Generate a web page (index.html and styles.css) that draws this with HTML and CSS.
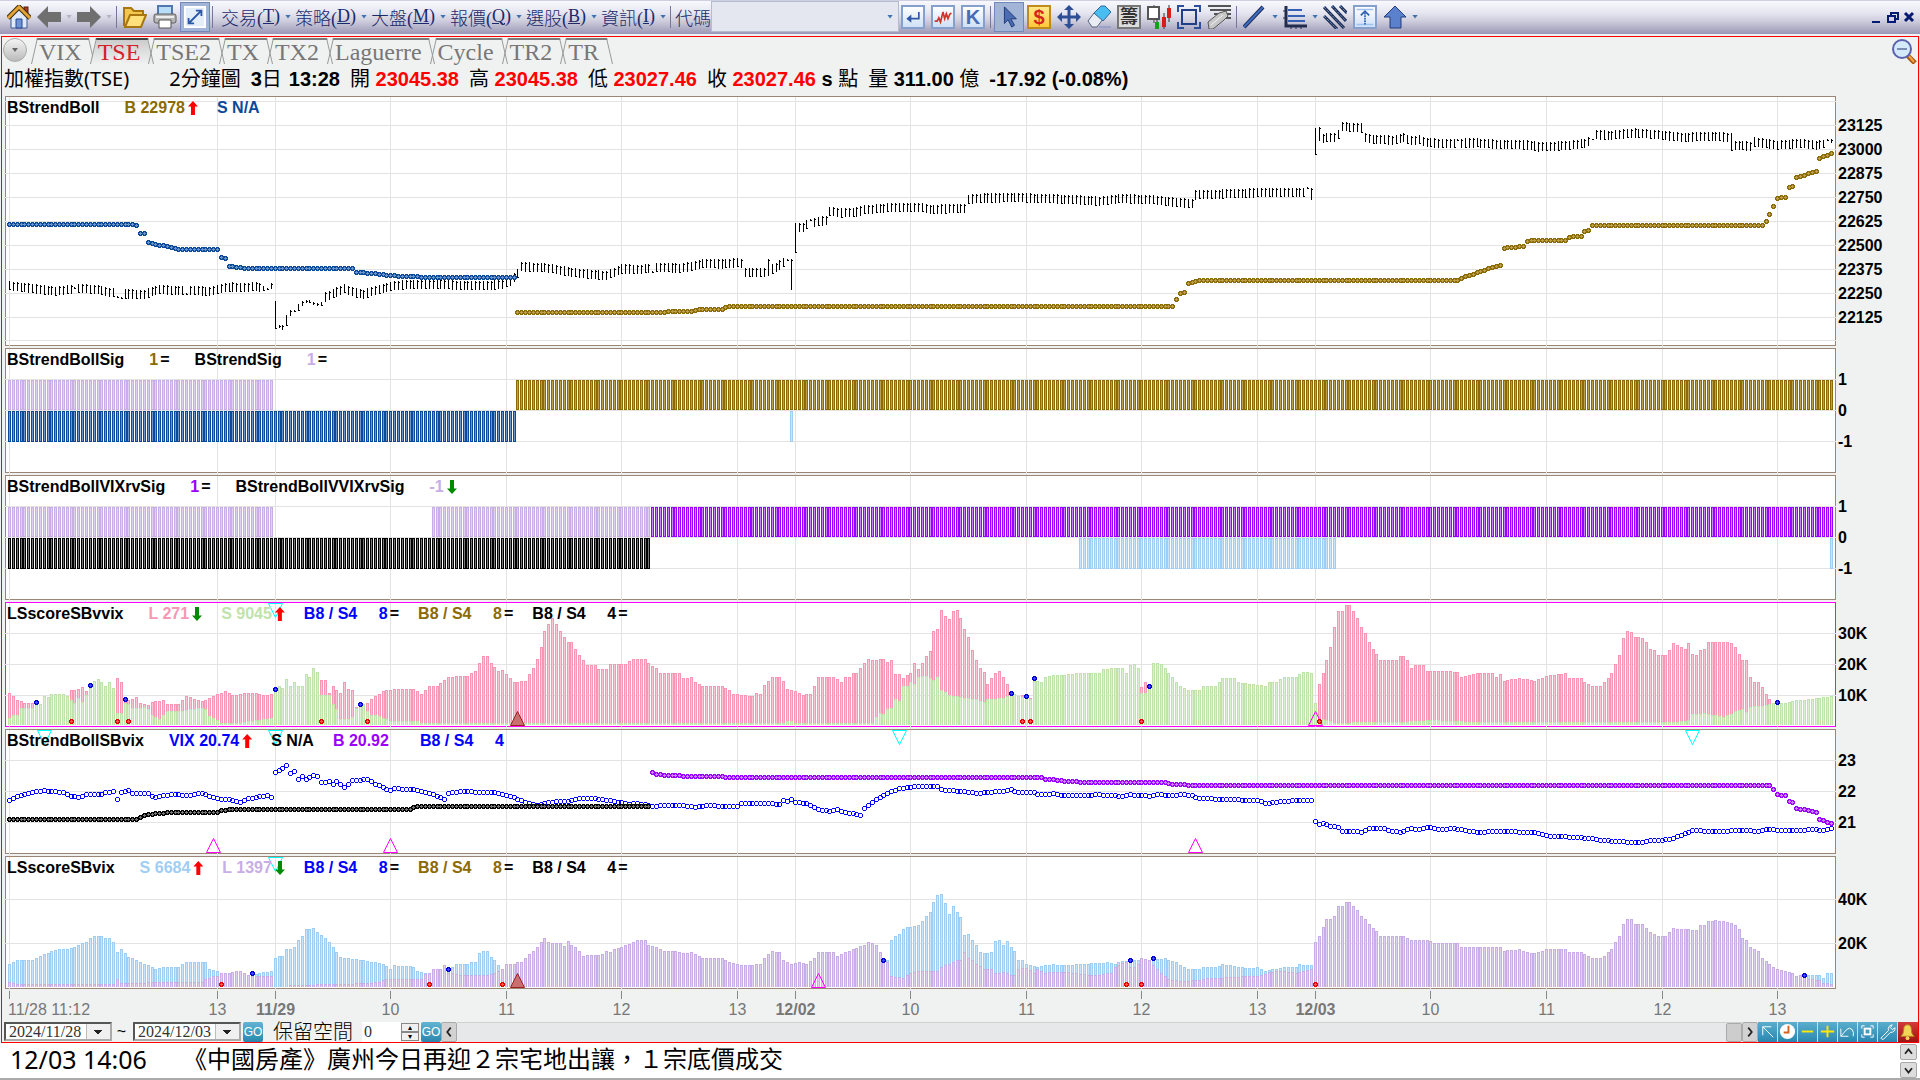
FILE: index.html
```
<!DOCTYPE html>
<html lang="zh-TW">
  <head>
    <meta charset="UTF-8" />
    <meta name="viewport" content="width=device-width, initial-scale=1.0" />
    <title>加權指數(TSE)</title>
    <link rel="stylesheet" href="styles.css">
  </head>
  <body>
    <header class="toolbar">
      <div class="tools">
        <button class="tool" aria-label="首頁"><svg viewBox="0 0 24 24"><rect x="17" y="2" width="4" height="8" fill="#b23a1c" stroke="#5a1e10"/><path d="M4 12 12 4l8 8v11H4z" fill="#dfe9fa" stroke="#3a5a9c"/><path d="M9 23v-9h6v9z" fill="#6d93d4" stroke="#27468c"/><path d="M1 13 12 2l11 11" fill="none" stroke="#3b2a0c" stroke-width="5"/><path d="M1 13 12 2l11 11" fill="none" stroke="#e2a437" stroke-width="3"/></svg></button>
        <button class="tool" aria-label="上一頁"><svg viewBox="0 0 24 24"><path d="M0 12 11 1v6h13v10H11v6z" fill="#6f6f6f"/></svg></button>
        <span class="caret faded"></span>
        <button class="tool" aria-label="下一頁"><svg viewBox="0 0 24 24"><path d="M24 12 13 1v6H0v10h13v6z" fill="#6f6f6f"/></svg></button>
        <span class="caret faded"></span>
        <span class="sep"></span>
        <button class="tool" aria-label="開啟"><svg viewBox="0 0 24 24"><path d="M1 21V3h7l3 3h9v5" fill="#f3c64d" stroke="#a87610" stroke-width="2"/><path d="M2 22 7 10h16l-5 12z" fill="#ffe07a" stroke="#a87610" stroke-width="2"/></svg></button>
        <button class="tool" aria-label="列印"><svg viewBox="0 0 24 24"><path d="M5 10V1h14v9" fill="#b9dcf7" stroke="#5378ae" stroke-width="2"/><rect x="1" y="9" width="22" height="9" rx="2" fill="#b5b5b5" stroke="#5e5e5e"/><path d="M6 15h12v8H6z" fill="#fff" stroke="#555"/><path d="M3 12h18" stroke="#eee" stroke-width="2"/></svg></button>
        <button class="tool pressed" aria-label="全螢幕"><svg viewBox="0 0 24 24"><rect x="1" y="1" width="22" height="22" fill="#e4eefb" stroke="#fff" stroke-width="2"/><path d="M6 18 18 6M13 5h6v6M5 13v6h6" fill="none" stroke="#2c58a8" stroke-width="2"/></svg></button>
        <span class="sep"></span>
      </div>
      <nav class="menus">
        <button class="menu">交易(<u>T</u>)<i class="caret"></i></button>
        <button class="menu">策略(<u>D</u>)<i class="caret"></i></button>
        <button class="menu">大盤(<u>M</u>)<i class="caret"></i></button>
        <button class="menu">報價(<u>Q</u>)<i class="caret"></i></button>
        <button class="menu">選股(<u>B</u>)<i class="caret"></i></button>
        <button class="menu">資訊(<u>I</u>)<i class="caret"></i></button>
      </nav>
      <span class="sep"></span>
      <label class="code-label" for="code">代碼</label>
      <div class="combo"><input id="code" type="text"><i class="caret"></i></div>
      <div class="tools drawing">
        <button class="tool boxed" aria-label="輸入"><svg viewBox="0 0 24 24"><path d="M19 6v8H7" fill="none" stroke="#2f57a5" stroke-width="2"/><path d="M4 14l6-5v10z" fill="#2f57a5"/></svg></button>
        <button class="tool boxed" aria-label="走勢圖"><svg viewBox="0 0 24 24"><path d="M2 17h3l2-4 2 5 3-12 2 8 2-6 2 6 2-5 2-2" fill="none" stroke="#d2342c" stroke-width="2"/></svg></button>
        <button class="tool boxed letter">K</button>
        <span class="sep"></span>
        <button class="tool pressed" aria-label="選取"><svg viewBox="0 0 24 24"><path d="M7 1v18l4-4 4 8 3-2-4-7h6z" fill="#4b6cb3" stroke="#1b3473"/></svg></button>
        <button class="tool boxed money">$</button>
        <button class="tool" aria-label="移動"><svg viewBox="0 0 24 24"><path d="M12 2v20M2 12h20" stroke="#2e4f95" stroke-width="3"/><path d="m12 0 5 5H7zM12 24l5-5H7zM0 12l5-5v10zM24 12l-5-5v10z" fill="#2e4f95"/></svg></button>
        <button class="tool" aria-label="橡皮擦"><svg viewBox="0 0 24 24"><path d="m1 16 6-8 9 6-6 8H5z" fill="#e9edf3" stroke="#57627c"/><path d="m7 8 7-7h4l6 6-8 9z" fill="#49bdf0" stroke="#31689c"/><path d="M12 22h12" stroke="#7f8ec9"/></svg></button>
        <button class="tool boxed chips">籌</button>
        <button class="tool" aria-label="K線"><svg viewBox="0 0 24 24"><path d="M7 0v18" stroke="#444"/><rect x="1" y="2" width="11" height="12" fill="#fff" stroke="#555" stroke-width="2"/><path d="M10 14v10M17 8v16M22 0v17" stroke="#333"/><rect x="8" y="17" width="4" height="7" fill="#16a01e"/><rect x="15" y="12" width="4" height="10" fill="#d81d1d"/><rect x="20" y="3" width="4" height="10" fill="#d81d1d"/></svg></button>
        <button class="tool" aria-label="框選"><svg viewBox="0 0 24 24"><path d="M1 7V1h6M17 1h6v6M23 17v6h-6M7 23H1v-6" fill="none" stroke="#2b4f9c" stroke-width="2"/><rect x="5" y="5" width="14" height="14" fill="none" stroke="#203f86" stroke-width="2"/></svg></button>
        <button class="tool" aria-label="清除畫線"><svg viewBox="0 0 24 24"><path d="M1 1h23M3 5h21M7 9h17M14 13h10" stroke="#555" stroke-width="2"/><path d="m1 17 11-9 7-2 2 5-4 4-11 9H2z" fill="#c7c7c7" stroke="#555"/><path d="m4 20 12-10" stroke="#f4f4f4"/></svg></button>
        <span class="sep"></span>
        <button class="tool" aria-label="直線"><svg viewBox="0 0 24 24"><path d="M1 22 20 2" stroke="#1e2c54" stroke-width="4"/><path d="M1 22 20 2" stroke="#3c6bc4" stroke-width="2"/></svg></button>
        <span class="caret"></span>
        <button class="tool" aria-label="黃金分割"><svg viewBox="0 0 24 24"><path d="M3 1v20h21" fill="none" stroke="#222d4e" stroke-width="3"/><path d="M5 5h14M5 11h17M5 16h17" stroke="#3560b5" stroke-width="2"/><path d="M8 20v4M13 20v4M18 20v4M0 6h4M0 13h4" stroke="#222d4e"/></svg></button>
        <span class="caret"></span>
        <button class="tool" aria-label="平行線"><svg viewBox="0 0 24 24"><path d="M1 11 14 24M1 2l20 21M9 1l14 15M17 1l7 7" stroke="#222d4e" stroke-width="3"/><path d="M1 11 14 24M1 2l20 21M9 1l14 15M17 1l7 7" stroke="#5b86cf" stroke-dasharray="3 1"/></svg></button>
        <button class="tool boxed" aria-label="上移"><svg viewBox="0 0 24 24"><path d="M2 3h20M2 21h20" stroke="#9ec2ee" stroke-width="2"/><path d="M12 7v14" stroke="#2c5fb4" stroke-width="2" stroke-dasharray="2 1"/><path d="m7 10 5-5 5 5" fill="none" stroke="#2c5fb4" stroke-width="2"/></svg></button>
        <button class="tool" aria-label="箭頭"><svg viewBox="0 0 24 24"><path d="m12 1 11 11h-5v11H7V12H1z" fill="#5b80cc" stroke="#223c7c"/></svg></button>
        <span class="caret"></span>
      </div>
      <div class="window-buttons">
        <button aria-label="最小化"><svg viewBox="0 0 12 12"><path d="M1 11h8" stroke="#051a73" stroke-width="2"/></svg></button>
        <button aria-label="還原"><svg viewBox="0 0 12 12"><path d="M4 5V2h7v6H8" fill="none" stroke="#051a73" stroke-width="2"/><path d="M1 5h7v6H1z" fill="none" stroke="#051a73" stroke-width="2"/></svg></button>
        <button aria-label="關閉"><svg viewBox="0 0 12 12"><path d="m2 2 8 8M10 2l-8 8" stroke="#051a73" stroke-width="3"/></svg></button>
      </div>
    </header>

    <main class="workspace">
      <div class="tabs">
        <button class="tab-list" aria-label="分頁清單"><i class="caret"></i></button>
        <button class="tab">VIX</button>
        <button class="tab active">TSE</button>
        <button class="tab">TSE2</button>
        <button class="tab">TX</button>
        <button class="tab">TX2</button>
        <button class="tab">Laguerre</button>
        <button class="tab">Cycle</button>
        <button class="tab">TR2</button>
        <button class="tab">TR</button>
        <button class="zoom-out" aria-label="縮小"><svg viewBox="0 0 26 26"><path d="m17 18 7 7" stroke="#a85b16" stroke-width="5"/><path d="m18 18 5 6" stroke="#f0a244" stroke-width="2"/><circle cx="11" cy="11" r="9" fill="#d4e9fa" stroke="#5a61ae" stroke-width="2"/><path d="M6 11h10" stroke="#24306f"/></svg></button>
      </div>

      <div class="quote">
        <span class="symbol">加權指數(TSE)</span>
        <span class="period">2分鐘圖</span>
        <span class="field"><b>3</b>日</span>
        <b class="time">13:28</b>
        <span class="field">開 <b class="up">23045.38</b></span>
        <span class="field">高 <b class="up">23045.38</b></span>
        <span class="field">低 <b class="up">23027.46</b></span>
        <span class="field">收 <b class="up">23027.46</b> <b>s</b> 點</span>
        <span class="field">量 <b>311.00</b> 億</span>
        <b>-17.92 (-0.08%)</b>
      </div>

      <div class="charts">
        <section class="row tall">
          <div class="panel">
            <svg class="plot" id="plot0"></svg>
            <div class="legend">
              <span class="name">BStrendBoll</span>
              <span class="gold">B 22978<i class="arrow up"></i></span>
              <span class="blue">S N/A</span>
            </div>
          </div>
          <svg class="scale" id="scale0"></svg>
        </section>
        <section class="row">
          <div class="panel">
            <svg class="plot" id="plot1"></svg>
            <div class="legend">
              <span class="name">BStrendBollSig</span>
              <span class="name"><em class="gold">1</em>=</span>
              <span class="name">BStrendSig</span>
              <span><em class="lavender">1</em>=</span>
            </div>
          </div>
          <svg class="scale" id="scale1"></svg>
        </section>
        <section class="row">
          <div class="panel">
            <svg class="plot" id="plot2"></svg>
            <div class="legend">
              <span class="name">BStrendBollVIXrvSig</span>
              <span class="name"><em class="purple">1</em>=</span>
              <span class="name">BStrendBollVVIXrvSig</span>
              <span class="lavender">-1<i class="arrow down"></i></span>
            </div>
          </div>
          <svg class="scale" id="scale2"></svg>
        </section>
        <section class="row">
          <div class="panel selected">
            <svg class="plot" id="plot3"></svg>
            <div class="legend">
              <span class="name">LSscoreSBvvix</span>
              <span class="pink">L 271<i class="arrow down"></i></span>
              <span class="green">S 9045<i class="arrow up"></i></span>
              <span class="pair bright">B8 / S4</span>
              <span><em class="bright">8</em>=</span>
              <span class="pair gold">B8 / S4</span>
              <span><em class="gold">8</em>=</span>
              <span class="pair">B8 / S4</span>
              <span><em>4</em>=</span>
            </div>
          </div>
          <svg class="scale" id="scale3"></svg>
        </section>
        <section class="row">
          <div class="panel">
            <svg class="plot" id="plot4"></svg>
            <div class="legend">
              <span class="name">BStrendBollSBvix</span>
              <span class="bright">VIX 20.74<i class="arrow up"></i></span>
              <span>S N/A</span>
              <span class="purple wide">B 20.92</span>
              <span class="pair bright">B8 / S4</span>
              <span class="bright">4</span>
            </div>
          </div>
          <svg class="scale" id="scale4"></svg>
        </section>
        <section class="row last">
          <div class="panel">
            <svg class="plot" id="plot5"></svg>
            <div class="legend">
              <span class="name">LSscoreSBvix</span>
              <span class="sky">S 6684<i class="arrow up"></i></span>
              <span class="lavender">L 1397<i class="arrow down"></i></span>
              <span class="pair bright">B8 / S4</span>
              <span><em class="bright">8</em>=</span>
              <span class="pair gold">B8 / S4</span>
              <span><em class="gold">8</em>=</span>
              <span class="pair">B8 / S4</span>
              <span><em>4</em>=</span>
            </div>
          </div>
          <svg class="scale" id="scale5"></svg>
        </section>
      </div>
      <svg class="time-axis" id="timeAxis"></svg>

      <div class="controls">
        <select class="date" aria-label="開始日期"><option>2024/11/28</option></select>
        <span class="tilde">~</span>
        <select class="date" aria-label="結束日期"><option>2024/12/03</option></select>
        <button class="go">GO</button>
        <label class="space-label" for="space">保留空間</label>
        <input class="space" id="space" type="text" value="0">
        <div class="spinner"><button aria-label="增加">▴</button><button aria-label="減少">▾</button></div>
        <button class="go">GO</button>
        <button class="scroll-button" aria-label="向左"><svg viewBox="0 0 16 20"><path d="m10 5-4 5 4 5" fill="none" stroke="#222" stroke-width="2"/></svg></button>
        <div class="track"><span class="thumb"></span></div>
        <button class="scroll-button" aria-label="向右"><svg viewBox="0 0 16 20"><path d="m6 5 4 5-4 5" fill="none" stroke="#222" stroke-width="2"/></svg></button>
        <button class="action" aria-label="游標"><svg viewBox="0 0 20 20"><path d="M5 14V5h9M5 5l11 11" fill="none" stroke="#fff"/></svg></button>
        <button class="action" aria-label="時間"><svg viewBox="0 0 20 20"><circle cx="10" cy="10" r="8" fill="#fff"/><path d="M11 4v7H6" fill="none" stroke="#d8621c" stroke-width="2"/></svg></button>
        <button class="action" aria-label="縮小間距"><svg viewBox="0 0 20 20"><path d="M4 10h12" stroke="#ffe800" stroke-width="2"/></svg></button>
        <button class="action" aria-label="放大間距"><svg viewBox="0 0 20 20"><path d="M3 10h14M10 4v12" stroke="#ffe800" stroke-width="2"/></svg></button>
        <button class="action" aria-label="復原"><svg viewBox="0 0 20 20"><path d="M3 7v8h8M3 15 9 8q3-3 6 0 2 3 1 7" fill="none" stroke="#fff"/></svg></button>
        <button class="action" aria-label="全圖"><svg viewBox="0 0 20 20"><path d="M4 7V4h3M13 4h3v3M16 13v3h-3M7 16H4v-3" fill="none" stroke="#fff"/><rect x="7" y="7" width="6" height="6" fill="none" stroke="#fff" stroke-width="2"/></svg></button>
        <button class="action" aria-label="設定"><svg viewBox="0 0 20 20"><path d="m3 17 8-8q-1-5 4-6l-2 3 2 2 3-2q0 5-5 5l-7 7q-2 1-3-1z" fill="none" stroke="#fff"/></svg></button>
        <button class="action alarm" aria-label="警示"><svg viewBox="0 0 20 20"><path d="M3 15q3-2 3-7 0-5 4-5t4 5q0 5 3 7z" fill="#f2d65a" stroke="#b78b17"/><circle cx="10" cy="17" r="2" fill="#f2d65a"/></svg></button>
      </div>
    </main>

    <footer class="news">
      <time>12/03 14:06</time>
      <a href="#">《中國房產》廣州今日再迎２宗宅地出讓，１宗底價成交</a>
      <div class="news-scroll">
        <button aria-label="上一則"><svg viewBox="0 0 16 16"><path d="m4 10 4-5 4 5" fill="none" stroke="#222" stroke-width="2"/></svg></button>
        <button aria-label="下一則"><svg viewBox="0 0 16 16"><path d="m4 6 4 5 4-5" fill="none" stroke="#222" stroke-width="2"/></svg></button>
      </div>
    </footer>

    <script src="chart.js"></script>
  </body>
</html>
```

FILE: styles.css
```
* {
  box-sizing: border-box;
}
body {
  margin: 0;
  height: 100vh;
  display: flex;
  flex-direction: column;
  background: #f0f2f1;
  font-family: "Liberation Sans", "Noto Sans CJK TC", sans-serif;
  font-size: 16px;
  color: #000;
  overflow: hidden;
}
button {
  margin: 0;
  padding: 0;
  border: none;
  background: none;
  font: inherit;
  color: inherit;
}
svg {
  display: block;
}
.caret {
  flex: none;
  width: 6px;
  height: 4px;
  background: #3f72af;
  clip-path: polygon(0 0, 100% 0, 50% 100%);
}
.caret.faded {
  background: #b4b4bf;
}

/* toolbar */
.toolbar {
  flex: none;
  height: 36px;
  padding: 0 5px 2px 7px;
  display: flex;
  align-items: center;
  border-top: 1px solid #cfcfe2;
  border-bottom: 2px solid #f0f0f6;
  background: linear-gradient(#f8f8fd, #e6e6f1 35%, #cfcedd 60%, #9a97b6);
  color: #1c2a6b;
}
.tools {
  display: flex;
  align-items: center;
  gap: 6px;
}
.tool {
  width: 24px;
  height: 24px;
  flex: none;
}
.tool svg {
  width: 24px;
  height: 24px;
}
.tool.boxed {
  border: 2px solid #86a0cd;
  background: linear-gradient(#fff, #cfe0f6);
}
.tool.boxed svg {
  width: 20px;
  height: 20px;
}
.tool.pressed {
  width: 30px;
  height: 30px;
  margin: 0 -3px;
  padding: 3px;
  border: 1px solid #7189b8;
  background: #a3b5d6;
}
.tool.pressed svg {
  width: 22px;
  height: 22px;
}
.tool.letter,
.tool.money,
.tool.chips {
  font-size: 20px;
  line-height: 20px;
  font-weight: bold;
  color: #4a6cb4;
}
.tool.money {
  border-color: #c08a1c;
  background: linear-gradient(#ffe98c, #ffc83a);
  color: #d4281c;
}
.tool.chips {
  border-color: #777;
  background: #ddd;
  font-size: 18px;
  color: #333;
}
.sep {
  flex: none;
  width: 1px;
  height: 22px;
  background: #77779a;
}
.tools .caret {
  margin: 0 -1px;
}
.tools .sep {
  margin-left: -1px;
}
.menus {
  display: flex;
  gap: 4px;
  margin: 0 4px 0 8px;
}
.menu {
  display: flex;
  align-items: center;
  font-family: "Liberation Serif", "Noto Sans CJK TC", serif;
  font-size: 18px;
  font-weight: 300;
}
.menu .caret {
  margin-left: 5px;
}
.menu u {
  text-decoration-thickness: 1px;
}
.code-label {
  margin-left: 4px;
  font-size: 18px;
  font-weight: 300;
}
.combo {
  width: 188px;
  height: 31px;
  display: flex;
  align-items: center;
  padding-right: 5px;
  border: 1px solid #b5bcce;
  background: #e4e7f0;
}
.combo input {
  flex: 1;
  min-width: 0;
  border: none;
  background: none;
}
.drawing {
  margin-left: 2px;
}
.window-buttons {
  margin-left: auto;
  display: flex;
  gap: 4px;
}
.window-buttons svg {
  width: 12px;
  height: 12px;
}

/* workspace */
.workspace {
  flex: 1;
  min-height: 0;
  margin: 0 1px;
  display: flex;
  flex-direction: column;
  border: 1px solid #f00;
}
.tabs {
  flex: none;
  height: 27px;
  display: flex;
  align-items: flex-start;
  padding-left: 1px;
}
.tab-list {
  width: 24px;
  height: 24px;
  margin: 1px 4px 0 0;
  display: flex;
  align-items: center;
  justify-content: center;
  border: 1px solid #aaa;
  border-radius: 50%;
  background: linear-gradient(#f4f4f4, #bbb);
}
.tab-list .caret {
  background: #666;
}
.tab {
  position: relative;
  z-index: 0;
  height: 26px;
  margin-top: 1px;
  padding: 0 8px;
  font-family: "Liberation Serif", serif;
  font-size: 24px;
  line-height: 28px;
  color: #777;
}
.tab::before,
.tab::after {
  content: "";
  position: absolute;
  z-index: -1;
  top: 0;
  bottom: 0;
  border-top: 2px solid #7c7c7c;
}
.tab::before {
  left: 3px;
  right: 50%;
  border-left: 1px solid #999;
  transform: skewX(-13deg);
}
.tab::after {
  left: 50%;
  right: -3px;
  border-right: 1px solid #999;
  transform: skewX(13deg);
}
.tab.active {
  color: #d6202c;
}
.tab.active::before,
.tab.active::after {
  border-top-color: #444;
  background: linear-gradient(#ccc, #f0f2f1);
}
.zoom-out {
  margin: 1px 1px 0 auto;
}
.zoom-out svg {
  width: 26px;
  height: 26px;
}
.quote {
  flex: none;
  height: 32px;
  padding: 0 0 2px 2px;
  display: flex;
  align-items: center;
  gap: 10px;
  font-size: 20px;
  line-height: 30px;
  white-space: nowrap;
}
.quote .symbol {
  margin-right: 30px;
}
.symbol,
.period {
  font-family: "Noto Sans", "Noto Sans CJK TC", sans-serif;
}
.quote .time {
  margin-left: -3px;
}
.up {
  color: #f00;
}

/* chart panels */
.charts {
  flex: 1;
  min-height: 0;
  display: flex;
  flex-direction: column;
  gap: 2px;
  padding-left: 3px;
}
.row {
  flex: 125 1 0;
  min-height: 0;
  display: flex;
}
.row.tall {
  flex-grow: 250;
}
.row.last {
  flex-grow: 133;
}
.panel {
  position: relative;
  flex: 1;
  min-width: 0;
  border: 1px solid #9b8574;
  background: #fff;
}
.panel.selected {
  border-color: #f0f;
}
.plot {
  position: absolute;
  inset: 0;
  width: 100%;
  height: 100%;
  overflow: visible;
}
.scale {
  flex: none;
  width: 82px;
  height: 100%;
  overflow: visible;
  font-weight: bold;
}
.legend {
  position: absolute;
  top: 1px;
  left: 1px;
  display: flex;
  gap: 19px;
  line-height: 20px;
  font-weight: bold;
  white-space: nowrap;
}
.legend em {
  margin-right: 2px;
  font-style: normal;
}
.legend .pair {
  min-width: 56px;
}
.legend .name {
  margin-right: 6px;
}
.legend .wide {
  margin-right: 12px;
}
.arrow {
  display: inline-block;
  width: 10px;
  height: 14px;
  margin: 0 0 -2px 3px;
  clip-path: polygon(50% 0, 100% 40%, 70% 40%, 70% 100%, 30% 100%, 30% 40%, 0 40%);
  background: #f00;
}
.arrow.down {
  background: #008a00;
  transform: rotate(180deg);
}
.gold { color: #8c6a04; }
.blue { color: #0b4a98; }
.bright { color: #00f; }
.purple { color: #9a00ff; }
.lavender { color: #c8aee4; }
.pink { color: #f797b5; }
.green { color: #bfe3ab; }
.sky { color: #9fcef4; }
.grid {
  stroke: #e3e3e3;
}
.time-axis {
  flex: none;
  width: 100%;
  height: 32px;
  fill: #777;
}
.time-axis path {
  stroke: #888;
}

/* bottom controls */
.controls {
  flex: none;
  height: 21px;
  display: flex;
  align-items: center;
}
.date {
  width: 108px;
  height: 19px;
  margin-left: 2px;
  padding: 0 0 0 3px;
  appearance: none;
  border: 2px inset #aaa;
  border-radius: 0;
  background: linear-gradient(#222, #222) 88px 6px / 8px 1px no-repeat, linear-gradient(#222, #222) 89px 7px / 6px 1px no-repeat, linear-gradient(#222, #222) 90px 8px / 4px 1px no-repeat, linear-gradient(#222, #222) 91px 9px / 2px 1px no-repeat, linear-gradient(90deg, #fff 80px, #888 80px, #f0f0f0 81px);
  font-family: "Liberation Serif", serif;
  font-size: 16px;
  line-height: 16px;
  color: #333;
}
.tilde {
  width: 19px;
  text-align: center;
}
.go {
  width: 20px;
  height: 20px;
  margin-left: 2px;
  border-radius: 2px;
  background: linear-gradient(#62b4d2, #2b86ac);
  font-size: 12px;
  color: #fff;
}
.space-label {
  margin: 0 9px 0 10px;
  font-size: 20px;
  line-height: 20px;
  font-weight: 300;
}
.space {
  width: 39px;
  height: 20px;
  padding: 0 2px;
  border: none;
  background: #fff;
  font-family: "Liberation Serif", serif;
  font-size: 16px;
  color: #333;
}
.spinner {
  display: flex;
  flex-direction: column;
}
.spinner button {
  width: 18px;
  height: 9px;
  border: 1px solid #888;
  background: #f0f0f0;
  font-size: 8px;
  line-height: 7px;
}
.scroll-button {
  width: 16px;
  height: 20px;
  border: 1px solid #aaa;
  border-radius: 2px;
  background: #d2d2d2;
}
.scroll-button svg {
  width: 14px;
  height: 18px;
}
.track {
  flex: 1;
  height: 20px;
  background: #e6e8ea;
  border-top: 1px solid #d0d0d0;
}
.thumb {
  display: block;
  width: 16px;
  height: 19px;
  margin-left: auto;
  border: 1px solid #aaa;
  border-radius: 2px;
  background: #cdcdcd;
}
.action {
  width: 20px;
  height: 20px;
  border-right: 1px solid #bfe0ee;
  background: linear-gradient(#5aaecd, #2a86b0);
}
.action svg {
  width: 19px;
  height: 19px;
}
.action.alarm {
  border: none;
  background: linear-gradient(#d43a3a, #9c1414);
}

/* news ticker */
.news {
  flex: none;
  height: 37px;
  padding-left: 10px;
  display: flex;
  align-items: center;
  border-bottom: 2px solid #aaa;
  background: #fff;
  font-family: "Noto Sans", "Noto Sans CJK TC", sans-serif;
  font-size: 24px;
  line-height: 30px;
}
.news time,
.news a {
  padding-bottom: 4px;
}
.news time {
  font-size: 25px;
}
.news a {
  margin-left: 36px;
  color: #000;
  text-decoration: none;
}
.news-scroll {
  margin-left: auto;
  padding-right: 3px;
  display: flex;
  flex-direction: column;
  gap: 2px;
}
.news-scroll button {
  width: 17px;
  height: 16px;
  border: 1px solid #aaa;
  border-radius: 2px;
  background: #ddd;
}
.news-scroll svg {
  width: 15px;
  height: 14px;
}
```

FILE: chart.js
```
const BARS = 474;
const COLORS = {
  blue: ["#0b4a98", "#6c96cb"],
  gold: ["#8c6a04", "#bda04c"],
  lavender: ["#c8aee4", "#e0d0f2"],
  black: ["#000", "#777"],
  purple: ["#9a00ff", "#cc84ff"],
  sky: ["#9fcef4", "#c9e4fb"],
  pink: ["#f797b5", "#fbc6d7"],
  green: ["#bfe3ab", "#daf0ce"],
  vix: ["#00f", "#fff"],
};

// hour and session lines: [bar, label, bold]
const times = [
  [0, "11/28 11:12"], [54, "13"], [69, "11/29", true], [99, "10"], [129, "11"], [159, "12"], [189, "13"],
  [204, "12/02", true], [234, "10"], [264, "11"], [294, "12"], [324, "13"],
  [339, "12/03", true], [369, "10"], [399, "11"], [429, "12"], [459, "13"],
];

// series are flat lists of bar, value; the bars between are interpolated
const price = [
  0,22286, 4,22276, 8,22266, 12,22257, 18,22273, 23,22264, 26,22250, 30,22243, 35,22241, 39,22266, 43,22260, 48,22262,
  52,22255, 55,22273, 58,22279, 61,22276, 64,22283, 66,22273, 68,22283, 82,22227, 84,22245, 87,22270, 90,22248, 92,22241,
  95,22260, 100,22288, 105,22292, 112,22295, 117,22286, 123,22286, 128,22292, 130,22309, 132,22349, 133,22384, 138,22382,
  141,22375, 145,22358, 151,22344, 155,22340, 159,22373, 164,22372, 168,22382, 174,22377, 177,22387, 180,22401, 185,22399,
  189,22406, 190,22400, 191,22356, 196,22356, 199,22382, 201,22406, 204,22536, 205,22590, 206,22590, 207,22605, 209,22616,
  212,22627, 213,22674, 216,22665, 220,22670, 222,22682, 229,22694, 237,22693, 239,22684, 248,22689, 249,22736, 253,22743,
  262,22745, 275,22736, 283,22727, 288,22740, 296,22736, 301,22724, 307,22714, 308,22759, 317,22766, 329,22774, 336,22774,
  340,23078, 341,23055, 343,23060, 344,23057, 345,23075, 346,23116, 351,23109, 352,23057, 354,23047, 357,23050, 359,23043,
  362,23059, 364,23042, 366,23047, 368,23033, 371,23029, 375,23029, 381,23031, 387,23023, 395,23019, 397,23010, 404,23017,
  409,23028, 410,23038, 412,23073, 416,23071, 422,23083, 428,23073, 435,23059, 441,23066, 446,23061, 448,23017, 452,23014,
  453,23036, 459,23019, 465,23029, 469,23019, 473,23038,
];
// bars with a range of their own: low, high
const ranges = {
  28: [22224, 22230], 29: [22222, 22228], 17: [22271, 22278], 46: [22238, 22246], 66: [22260, 22284], 67: [22270, 22273],
  68: [22270, 22300], 69: [22061, 22205], 70: [22064, 22083], 71: [22057, 22080], 72: [22075, 22132], 73: [22127, 22158],
  74: [22153, 22160], 75: [22153, 22189], 76: [22179, 22207], 77: [22193, 22213], 78: [22193, 22213], 79: [22183, 22202],
  80: [22180, 22193], 81: [22180, 22200], 167: [22356, 22360], 197: [22335, 22424], 202: [22424, 22427],
  203: [22264, 22427], 204: [22457, 22615], 208: [22629, 22634], 337: [22796, 22799], 338: [22734, 22797],
  339: [22967, 23109], 340: [23040, 23115], 376: [23045, 23049], 411: [23047, 23051], 447: [22990, 23080],
  471: [23005, 23047], 472: [23046, 23049], 473: [23030, 23049],
};
const upper = [
  0,22608, 32,22608, 33,22602, 34,22561, 35,22561, 36,22514, 39,22500, 44,22479, 54,22479, 55,22436, 56,22431, 57,22391,
  61,22380, 89,22380, 90,22359, 100,22340, 107,22333, 131,22333,
];
const lower = [
  132,22149, 170,22151, 171,22156, 177,22156, 179,22165, 185,22165, 186,22177, 188,22182, 302,22182, 303,22214, 304,22250,
  305,22254, 306,22302, 309,22318, 376,22318, 377,22328, 387,22396, 388,22484, 393,22493, 394,22521, 397,22526, 404,22526,
  405,22542, 408,22545, 409,22573, 410,22578, 411,22604, 455,22604, 456,22625, 457,22661, 458,22703, 459,22744, 461,22750,
  462,22802, 463,22807, 464,22854, 469,22883, 470,22953, 473,22977,
];
const vvixLong = [
  0,10.6, 2,8.3, 4,7.4, 7,7.4, 8,0, 15,0, 16,11.3, 18,11.7, 19,12.3, 20,11, 21,0, 27,0, 28,15.3, 29,13.9, 30,8.4, 31,8.1,
  33,9.1, 34,7.4, 36,6.5, 37,7.7, 40,8.1, 41,6.8, 44,6.8, 46,9.4, 48,8.7, 50,7.8, 53,9.5, 56,11.1, 58,9.9, 60,10.1, 62,10.6,
  65,10.3, 67,9.7, 68,10.3, 69,0, 80,0, 81,14.6, 82,14.6, 83,10.6, 84,12.6, 86,10.6, 87,13.9, 88,11.9, 89,11.6, 90,6, 92,6,
  93,7.4, 95,9.5, 97,11, 99,11.6, 105,11.9, 107,10.3, 109,12.6, 111,12.6, 114,15.5, 116,16.1, 119,16.1, 121,17.7, 122,20.3,
  123,22.3, 124,22.3, 125,20.3, 127,17.7, 128,18, 130,15.3, 131,14.1, 134,14.3, 136,18.7, 137,21.6, 138,25.2, 139,30.6,
  140,32.6, 141,34.8, 142,32.6, 144,28.7, 145,26.9, 146,26.9, 147,24.8, 148,22.9, 149,21, 150,19.4, 152,19.4, 153,18.1,
  155,18.1, 156,19.7, 160,20, 162,21.6, 165,21.6, 166,20.1, 168,18.5, 169,16.9, 174,16.9, 175,15.2, 177,15.5, 178,14.2,
  180,12.9, 185,12.7, 187,11.6, 188,10.3, 190,9.9, 193,9.4, 194,10.6, 195,10.3, 196,13.2, 198,15.8, 200,15.8, 201,14.5,
  202,11.9, 204,11, 206,10, 208,10.3, 209,12.6, 210,15.8, 214,15.5, 216,14.2, 217,15.5, 218,15.5, 219,17.1, 220,17.1,
  221,18.7, 222,20.1, 223,21.6, 224,21, 225,21, 226,21.6, 227,21.6, 228,20.6, 229,21.3, 230,16.5, 231,16.5, 232,15.2,
  234,17.1, 235,20.1, 236,18.1, 237,20.3, 238,22.3, 239,24.2, 240,30.4, 241,31, 242,37.4, 243,35.2, 244,34.5, 245,36.8,
  246,37.4, 247,34.8, 248,31, 249,28.7, 250,24.5, 251,21.3, 252,18.7, 253,17.4, 254,13.5, 255,15.2, 256,16.8, 257,17.7,
  258,15.8, 259,13.5, 260,0, 262,0, 263,9.7, 264,9.7, 265,9, 266,0, 293,0, 294,12.3, 295,13.9, 296,0, 339,0, 340,13.5,
  341,16.8, 342,21.3, 343,25.2, 344,31.9, 345,36.8, 346,36.8, 347,39, 348,39, 349,36.8, 350,34.8, 351,31.9, 352,29.7,
  353,27.1, 354,24.8, 355,23.2, 356,21.3, 360,21.3, 361,22.3, 362,22.3, 363,21.3, 364,18.7, 365,19.4, 367,19.4, 368,17.7,
  375,17.4, 376,17.4, 377,15.8, 381,16.8, 385,16.8, 386,15.8, 387,16.5, 388,14.5, 392,15.2, 396,14.5, 398,15.2, 399,16.1,
  404,16.8, 405,15.2, 408,15.2, 409,13.9, 411,12.6, 413,12.6, 414,13.9, 415,15.2, 416,16.8, 417,19.7, 418,22.9, 419,28.4,
  420,30.6, 421,30.3, 422,28.7, 424,28.4, 425,26.8, 426,24.8, 427,24.5, 428,22.9, 430,22.9, 431,24.5, 432,26.5, 433,26.1,
  434,25.2, 435,24.8, 436,26.5, 437,23.2, 438,22.6, 439,24.5, 440,24.8, 441,27.1, 446,27.1, 447,26.5, 448,25.2, 449,23.2,
  450,21.3, 451,21, 452,15.8, 453,14.2, 454,13.9, 455,12.3, 456,10.3, 457,8.7, 458,7.4, 459,0, 473,0,
];
const vvixShort = [
  0,2.3, 1,3.3, 2,3.3, 3,5.5, 6,5.8, 7,7.4, 8,7.1, 9,9.4, 10,9.1, 11,10.3, 14,10.3, 15,9.4, 16,8.1, 17,7.4, 18,9, 19,7.7,
  20,10, 21,12, 22,14.5, 23,15, 24,14.1, 25,12.6, 26,13.9, 27,12, 28,3.9, 29,3.9, 30,7.4, 31,6.8, 32,5.5, 34,5.5, 35,6,
  36,5.3, 37,3.5, 38,2.7, 39,2, 41,4.8, 45,4.6, 47,5.3, 50,5.8, 51,5.3, 52,3.1, 54,1.7, 55,.9, 60,.9, 64,1.7, 66,2, 68,2.4,
  69,11.3, 70,12.9, 71,12, 72,15, 73,12.9, 74,14.1, 75,12.9, 76,12.9, 77,16.5, 78,15.8, 79,18.7, 80,17.4, 81,9.7, 83,9.7,
  84,6.9, 85,5.3, 86,2, 88,2, 89,2.6, 90,5.6, 91,6.5, 92,7.1, 93,4.8, 94,3.5, 96,3, 98,2, 99,1.4, 106,1.4, 107,.9,
  201,.9, 202,1.5, 203,1.5, 204,.9, 224,.9, 225,2.7, 226,3.9, 227,3.7, 228,5.3, 229,5.8, 230,8.4, 231,8, 232,12.6, 233,12.9,
  234,14.2, 235,13.5, 236,15.8, 238,16.1, 240,14.8, 241,15.8, 242,11.6, 244,9.9, 248,9, 251,8.4, 253,7.7, 254,8.4, 258,9,
  260,10.3, 261,10.3, 262,9.4, 265,8.7, 266,14.5, 268,14.2, 269,15.8, 270,16.1, 275,16.5, 278,17.1, 283,17.1, 284,18.2,
  289,18.7, 290,17.1, 291,19.4, 292,20, 293,18.7, 294,10.6, 295,10.6, 296,12.9, 297,20.3, 299,20, 300,18.4, 301,17.1,
  302,15.5, 303,14.2, 304,12.9, 306,11.6, 309,11.6, 310,12.6, 313,12.6, 315,15.2, 318,15.2, 319,13.9, 326,12.9, 327,14.2,
  329,14.2, 331,15.5, 334,15.8, 336,17.4, 338,17.1, 339,7.4, 340,.9, 341,2.2, 343,1.5, 344,.9, 363,1.2, 368,1.7, 377,1.5,
  378,1, 433,1, 434,1.3, 436,1.7, 437,3.7, 440,3.9, 443,3.3, 445,2.9, 447,3.7, 448,4.8, 450,5.2, 451,4.2, 452,6.1, 455,6.3,
  457,7.1, 461,7.4, 463,8, 468,8.6, 473,9.4,
];
const vix = [
  0,21.71, 2,21.85, 6,21.98, 9,22.02, 14,21.96, 16,21.84, 18,21.81, 20,21.89, 24,21.9, 25,21.97, 27,21.99, 28,21.74,
  29,21.97, 31,22.02, 32,21.94, 36,21.95, 37,21.84, 38,21.81, 42,21.9, 47,21.87, 50,21.95, 52,21.85, 54,21.77, 57,21.73,
  60,21.65, 62,21.76, 65,21.83, 67,21.87, 68,21.81, 69,22.61, 70,22.67, 72,22.84, 73,22.59, 74,22.65, 75,22.39, 76,22.47,
  77,22.39, 79,22.51, 80,22.47, 81,22.29, 83,22.32, 84,22.24, 85,22.32, 87,22.13, 89,22.34, 93,22.39, 95,22.24, 99,22.02,
  100,22.09, 105,22.05, 109,21.94, 112,21.81, 113,21.74, 114,21.94, 118,22, 122,21.97, 127,21.95, 130,21.84, 134,21.66,
  137,21.56, 141,21.66, 145,21.68, 148,21.76, 152,21.76, 157,21.68, 161,21.59, 163,21.61, 167,21.53, 175,21.54, 178,21.48,
  181,21.54, 189,21.51, 190,21.61, 195,21.61, 200,21.59, 201,21.7, 202,21.68, 203,21.73, 204,21.65, 207,21.6, 210,21.42,
  213,21.35, 215,21.42, 217,21.31, 220,21.26, 221,21.23, 222,21.45, 224,21.65, 227,21.88, 231,22.09, 235,22.15, 238,22.16,
  241,22.16, 242,22.05, 245,22.02, 252,21.94, 258,22.01, 260,22.06, 262,21.97, 266,21.96, 267,21.9, 271,21.92, 274,21.87,
  283,21.89, 289,21.84, 291,21.89, 296,21.85, 298,21.9, 302,21.86, 304,21.9, 307,21.87, 309,21.77, 317,21.74, 323,21.71,
  325,21.68, 326,21.6, 328,21.63, 330,21.67, 334,21.71, 338,21.71, 339,21.03, 340,20.94, 341,20.97, 343,20.87, 345,20.84,
  346,20.71, 350,20.7, 351,20.68, 353,20.8, 357,20.81, 358,20.74, 361,20.68, 364,20.8, 366,20.77, 368,20.84, 372,20.77,
  375,20.81, 379,20.71, 382,20.68, 385,20.71, 389,20.7, 396,20.68, 400,20.56, 406,20.52, 411,20.47, 413,20.42, 418,20.38,
  424,20.35, 426,20.41, 431,20.45, 434,20.59, 437,20.74, 443,20.7, 449,20.75, 454,20.71, 456,20.77, 463,20.74, 469,20.77,
  471,20.74, 473,20.8,
];
const vixUpper = [0,21.1, 33,21.1, 34,21.16, 36,21.26, 42,21.32, 54,21.32, 55,21.38, 58,21.42, 104,21.42, 106,21.52, 166,21.52];
const vixLower = [
  167,22.61, 168,22.56, 170,22.52, 174,22.51, 175,22.47, 185,22.47, 186,22.44, 268,22.44, 269,22.39, 272,22.37, 275,22.32,
  280,22.29, 300,22.29, 302,22.23, 305,22.22, 306,22.18, 457,22.18, 458,22.06, 459,21.9, 461,21.86, 462,21.68, 463,21.65,
  464,21.45, 467,21.4, 469,21.32, 470,21.1, 471,21.06, 472,21, 473,20.96,
];
const vixShort = [
  0,10.5, 2,12.3, 6,12.3, 7,13.6, 9,15, 11,16.4, 13,17.7, 15,17.7, 17,18.6, 18,19.5, 20,20.5, 21,22.3, 22,23.6, 24,23.6,
  25,22.3, 26,22.3, 27,20.5, 28,15.9, 29,17.3, 31,14, 33,12.7, 34,11.4, 36,10, 38,8.2, 40,9.5, 44,9.2, 45,10.9, 46,11.8,
  51,11.4, 52,8.2, 54,7.3, 55,0, 63,0, 64,6, 65,6.8, 68,7.3, 69,13.2, 70,14.5, 71,14.5, 72,17.3, 73,17.3, 74,18.6, 75,21.4,
  76,23.2, 77,26.4, 79,26.8, 80,25, 82,22.7, 83,20.5, 84,18.6, 85,15.9, 86,14, 88,13.2, 92,12.3, 95,11.4, 97,10.5, 99,8.6,
  100,10, 105,9.5, 106,7.7, 108,6.4, 109,0, 113,0, 114,8, 116,10.5, 119,10.9, 120,11.8, 121,11.8, 122,15.5, 123,16.4,
  124,16.4, 125,14, 126,12.3, 127,10, 128,8.6, 129,0, 227,0, 228,12.3, 229,21.4, 230,23.6, 231,24.5, 232,26.4, 233,27.3,
  236,28.2, 237,30, 238,32.3, 239,34.5, 240,39, 241,41.8, 242,42.3, 243,38.6, 244,33.6, 245,36.8, 246,34.5, 247,31.8,
  248,24, 249,24.5, 250,21.4, 251,19.5, 252,15.9, 254,15.5, 255,15.9, 256,20.9, 257,21.8, 258,19.5, 259,20.9, 260,18.2,
  261,16.4, 262,12.7, 263,12.7, 264,10.9, 267,9.5, 271,10.5, 274,10, 277,10.5, 280,10.9, 285,11.4, 287,10.6, 288,11.8,
  292,12.3, 293,12.3, 294,0, 296,0, 297,12.7, 300,13.2, 303,11.4, 304,10, 306,8.6, 309,8.3, 310,9.1, 313,9.1, 315,10.5,
  318,9.8, 321,8.8, 324,9.1, 326,7.7, 330,8.8, 332,9.5, 334,9.5, 335,10.5, 338,10, 339,0, 466,0, 467,5.9, 470,5.9, 471,4.5,
  472,6.8, 473,6.8,
];
const vixLong = [
  0,2.3, 2,1.4, 15,1.4, 17,1.8, 27,1.8, 28,3.8, 29,2, 36,2.3, 37,2.7, 50,2.7, 51,3.8, 53,5, 54,5, 55,6.4, 57,6.8, 59,7.7,
  60,7.7, 61,6.4, 62,5.5, 68,5, 69,0, 72,0, 73,1, 80,1.4, 93,2, 96,2.7, 98,3.8, 107,3.8, 108,6, 109,6.8, 110,8.2, 112,8.6,
  113,10, 114,6.8, 118,5.5, 124,5.5, 126,6.4, 128,8.6, 129,10.5, 131,10.9, 132,11.8, 133,11.8, 134,13.2, 135,15, 136,16.4,
  137,18.2, 138,20.5, 139,22.3, 140,20.5, 143,20, 144,19, 145,21, 146,19.5, 147,18.6, 148,16.4, 149,14.5, 154,15, 155,16.4,
  156,15.9, 157,17.7, 159,18.6, 162,20.5, 163,21.4, 165,21.4, 166,19.5, 168,18.2, 170,16.4, 173,16.8, 175,15.5, 177,15.9,
  179,14.5, 180,13.2, 185,13.2, 187,11.8, 190,10, 193,10, 195,10.9, 196,13.6, 198,16.4, 200,15.9, 201,12.7, 203,10.9,
  205,11.4, 207,10.5, 209,13.2, 210,15.9, 214,15.9, 215,14.5, 217,15.9, 219,17.3, 222,19.5, 223,20.5, 225,19.5, 226,15.9,
  227,12.3, 228,11.4, 229,5, 232,4.5, 234,6.8, 236,7.7, 241,7.7, 242,9.5, 244,10.9, 246,12.3, 247,12.7, 248,15.9, 249,13.2,
  250,12.7, 251,10.5, 253,8.6, 255,8.2, 256,6.4, 258,7.1, 260,5.9, 261,5.9, 262,8.6, 264,9, 266,6.8, 267,8.6, 269,6.8,
  274,7.1, 280,5.9, 283,5.5, 286,6.8, 287,9.5, 290,11.8, 291,9.1, 292,9.1, 293,10.5, 294,13.2, 296,12.7, 297,10, 299,6.4,
  301,3.8, 304,2.9, 308,3.3, 311,4.1, 318,4.8, 325,5.5, 327,7, 330,7.7, 334,6.8, 338,8.2, 339,20.5, 340,23.6, 341,27.3,
  342,30.9, 343,30.9, 344,32.7, 345,36.8, 346,36.8, 347,39, 348,39, 349,36.8, 350,35, 351,32.7, 352,30.9, 353,29, 354,26.8,
  355,25.5, 356,23.6, 362,23.6, 364,21.8, 368,21.8, 370,20, 376,20, 377,18.2, 387,18.5, 388,16.8, 392,17.3, 395,15.5,
  397,15.9, 399,17.3, 404,17.3, 405,15.9, 408,15.9, 410,14.5, 411,13.2, 413,13.2, 414,14.5, 416,17.3, 417,20.5, 418,23.6,
  419,29, 420,30.9, 421,30.9, 422,29, 424,29, 425,26.8, 426,25, 428,23.6, 430,23.2, 432,26.8, 438,26.2, 439,28.2, 440,28.2,
  441,30, 443,30.5, 447,29.5, 448,28.6, 449,26.4, 450,22.7, 451,21.4, 452,18.2, 454,16.4, 455,13.2, 457,10.5, 459,8.2,
  461,7.7, 463,6.4, 464,5, 465,5.5, 467,3.8, 470,3.5, 471,2, 473,1.8,
];

const panels = [
  {
    min: 21979, max: 23273,
    grid: [23250, 23125, 23000, 22875, 22750, 22625, 22500, 22375, 22250, 22125, 22000],
    labels: [23125, 23000, 22875, 22750, 22625, 22500, 22375, 22250, 22125],
    draw: (p) => prices(p) + dots(p, upper, "blue") + dots(p, lower, "gold"),
  },
  {
    min: -1.985, max: 1.985, grid: [1, 0, -1], labels: [1, 0, -1],
    draw: (p) => signal(p, 0, 68, 1, "lavender") + signal(p, 0, 131, -1, "blue") +
      signal(p, 132, 473, 1, "gold") + signal(p, 203, 203, -1, "sky"),
  },
  {
    min: -1.985, max: 1.985, grid: [1, 0, -1], labels: [1, 0, -1],
    draw: (p) => signal(p, 0, 68, 1, "lavender") + signal(p, 110, 166, 1, "lavender") + signal(p, 0, 166, -1, "black") +
      signal(p, 167, 473, 1, "purple") + signal(p, 278, 344, -1, "sky") + signal(p, 473, 473, -1, "sky"),
  },
  {
    min: 0, max: 39.7, grid: [30, 20, 10], labels: [30, 20, 10], unit: "K",
    draw: (p) => columns(p, vvixLong, "pink") + columns(p, vvixShort, "green") + triangle(p, 69, "down", "#0ff") +
      triangle(p, 132, "up", "#a02020", "#c87070") + triangle(p, 339, "up", "#f0f") +
      marks(p, [7,7.7, 21,13.1, 30,8.4, 69,11.9, 91,7, 260,10.5, 264,9.4, 266,15.4, 296,12.9, 459,7.7], "#0000d0", "#44f") +
      marks(p, [16,1.4, 28,1.4, 31,1.4, 81,1.4, 93,1.4, 263,1.4, 265,1.4, 294,1.4, 340,1.4], "#e00000", "#f55"),
  },
  {
    min: 20.015, max: 23.985, grid: [23, 22, 21], labels: [23, 22, 21],
    draw: (p) => dots(p, vix, "vix") + dots(p, vixUpper, "black") + dots(p, vixLower, "purple") +
      [9, 69, 231, 437].map((i) => triangle(p, i, "down", "#0ff")).join("") +
      [53, 99, 308].map((i) => triangle(p, i, "up", "#f0f")).join(""),
  },
  {
    min: 0, max: 59.5, grid: [40, 20], labels: [40, 20], unit: "K",
    draw: (p) => columns(p, vixShort, "sky") + columns(p, vixLong, "lavender") + triangle(p, 69, "down", "#0ff") +
      triangle(p, 132, "up", "#a02020", "#c87070") + triangle(p, 210, "up", "#f0f") +
      marks(p, [63,6.4, 114,8.6, 227,12.3, 291,12.7, 297,13.2, 466,5.5], "#0000d0", "#44f") +
      marks(p, [55,1.8, 109,1.8, 128,1.8, 290,1.8, 294,1.8, 339,1.8], "#e00000", "#f55"),
  },
];

function xOf(i, width) {
  return Math.round(3 + (i * (width - 7)) / (BARS - 1));
}

function eachBar(series, callback) {
  for (let k = 0; k < series.length; k += 2) {
    const start = series[k];
    const end = k + 2 < series.length ? series[k + 2] : start + 1;
    const next = k + 2 < series.length ? series[k + 3] : series[k + 1];
    for (let i = start; i < end; i++) {
      // a series that is off at one end stays off until the next point
      const flat = series[k + 1] === 0 || next === 0;
      const step = flat ? 0 : ((next - series[k + 1]) * (i - start)) / (end - start);
      callback(i, series[k + 1] + step);
    }
  }
}

function prices(p) {
  let d = "";
  const bar = (i, low, high) => {
    const top = p.y(high);
    const bottom = Math.max(p.y(low), top + 1);
    d += `M${p.x(i) + 0.5} ${top}V${bottom}`;
    d += `M${p.x(i)} ${i % 3 ? top + 1.5 : bottom - 0.5}h2`;
  };
  eachBar(price, (i, value) => {
    if (ranges[i]) return;
    bar(i, value - 24, value + 24);
  });
  Object.keys(ranges).forEach((i) => bar(Number(i), ranges[i][0], ranges[i][1]));
  return `<path d="${d}" stroke="#000" fill="none" shape-rendering="crispEdges"/>`;
}

function barPaths(outer, inner, color) {
  return `<path d="${outer}" fill="${COLORS[color][0]}"/><path d="${inner}" fill="${COLORS[color][1]}"/>`;
}

function columns(p, series, color) {
  const bottom = p.height - 1;
  let outer = "";
  let inner = "";
  eachBar(series, (i, value) => {
    if (value <= 0) return;
    const top = Math.min(p.y(value), bottom - 1);
    outer += `M${p.x(i) - 1} ${top}h3V${bottom}h-3z`;
    inner += `M${p.x(i)} ${top + 1}h1V${bottom}h-1z`;
  });
  return barPaths(outer, inner, color);
}

function signal(p, from, to, value, color) {
  const top = p.y(Math.max(value, 0)) + 1;
  const bottom = p.y(Math.min(value, 0)) + (value < 0 ? 1 : 0);
  let outer = "";
  let inner = "";
  for (let i = from; i <= to; i++) {
    outer += `M${p.x(i) - 1} ${top}h3V${bottom}h-3z`;
    inner += `M${p.x(i)} ${top + 1}h1V${bottom - 1}h-1z`;
  }
  return barPaths(outer, inner, color);
}

// 5px round marks drawn on whole pixels
function marks(p, series, stroke, fill) {
  let ring = "";
  let center = "";
  for (let k = 0; k < series.length; k += 2) {
    const x = p.x(series[k]);
    const y = p.y(series[k + 1]);
    const disc = `M${x - 1} ${y - 2}h3v1h1v3h-1v1h-3v-1h-1v-3h1z`;
    const core = `M${x - 1} ${y - 1}h3v3h-3z`;
    // hollow marks overlap as rings, filled ones keep a small light core
    if (fill === "#fff") {
      ring += disc + core;
      center += core;
    } else {
      ring += disc;
      center += `M${x} ${y - 1}h1v1h1v1h-1v1h-1v-1h-1v-1h1z`;
    }
  }
  if (fill === "#fff") {
    let rings = "";
    for (let k = 0; k < series.length; k += 2) {
      const x = p.x(series[k]);
      const y = p.y(series[k + 1]);
      rings += `M${x - 1} ${y - 2}h3v1h-3zM${x - 1} ${y + 2}h3v1h-3zM${x - 2} ${y - 1}h1v3h-1zM${x + 2} ${y - 1}h1v3h-1z`;
    }
    return `<path d="${center}" fill="${fill}"/><path d="${rings}" fill="${stroke}"/>`;
  }
  return `<path d="${ring}" fill="${stroke}"/><path d="${center}" fill="${fill}"/>`;
}

function dots(p, series, color) {
  const list = [];
  eachBar(series, (i, value) => list.push(i, value));
  return marks(p, list, COLORS[color][0], COLORS[color][1]);
}

function triangle(p, i, direction, stroke, fill = "none") {
  const x = p.x(i) + 0.5;
  const base = direction === "up" ? p.height - 0.5 : 0.5;
  const tip = direction === "up" ? base - 14 : base + 14;
  return `<path d="M${x - 7} ${base}h14L${x} ${tip}z" stroke="${stroke}" fill="${fill}"/>`;
}

function render() {
  let width = 0;
  panels.forEach((panel, n) => {
    const svg = document.getElementById("plot" + n);
    width = svg.clientWidth;
    const height = svg.clientHeight;
    const p = {
      height,
      x: (i) => xOf(i, width),
      y: (value) => Math.floor(((panel.max - value) / (panel.max - panel.min)) * height),
    };
    let grid = "";
    panel.grid.forEach((value) => (grid += `M-2 ${p.y(value) + 0.5}H${width + 1}`));
    times.forEach(([i]) => (grid += `M${p.x(i) + 0.5} 0V${height + 3}`));
    svg.innerHTML = `<path class="grid" d="${grid}"/>` + panel.draw(p);
    document.getElementById("scale" + n).innerHTML = panel.labels
      .map((value) => `<text x="2" y="${p.y(value) + 7}">${value}${panel.unit || ""}</text>`)
      .join("");
  });

  // the panels start 4px inside the axis
  document.getElementById("timeAxis").innerHTML = times
    .map(([i, label, bold]) => {
      const x = xOf(i, width) + 4.5;
      const place = i === 0 ? 'x="6"' : `x="${x}" text-anchor="middle"`;
      return `<path d="M${x} 0v10"/><text ${place} y="26" ${bold ? 'font-weight="bold"' : ""}>${label}</text>`;
    })
    .join("");
}

render();
window.addEventListener("resize", render);
```
